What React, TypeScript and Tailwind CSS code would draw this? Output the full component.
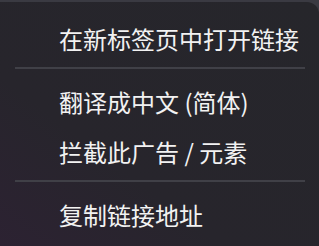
const ITEMS: (string | null)[] = [
  "在新标签页中打开链接",
  null,
  "翻译成中文 (简体)",
  "拦截此广告 / 元素",
  null,
  "复制链接地址",
];

export default function App() {
  return (
    <div className="h-[246px] w-[319px] overflow-hidden bg-[#3a3a42]">
      <div
        className="mt-[2px] h-[244px] w-[319px] rounded-tr-[12px] bg-[linear-gradient(to_top_right,#2c2232_0%,#27252c_35%,#26262b_100%)] pt-[12px]"
        style={{ fontFamily: '"Noto Sans CJK SC", "Microsoft YaHei", sans-serif' }}
      >
        {ITEMS.map((item, i) =>
          item === null ? (
            <div key={i} className="h-[13px] pt-[3px] pl-[15px] pr-[14px]">
              <div className="h-[2px] bg-[#404047]" />
            </div>
          ) : (
            <div key={i} className="flex h-[50px] items-center pl-[59px] text-[24px] leading-none text-[#f2f2f2]">
              {item}
            </div>
          )
        )}
      </div>
    </div>
  );
}
